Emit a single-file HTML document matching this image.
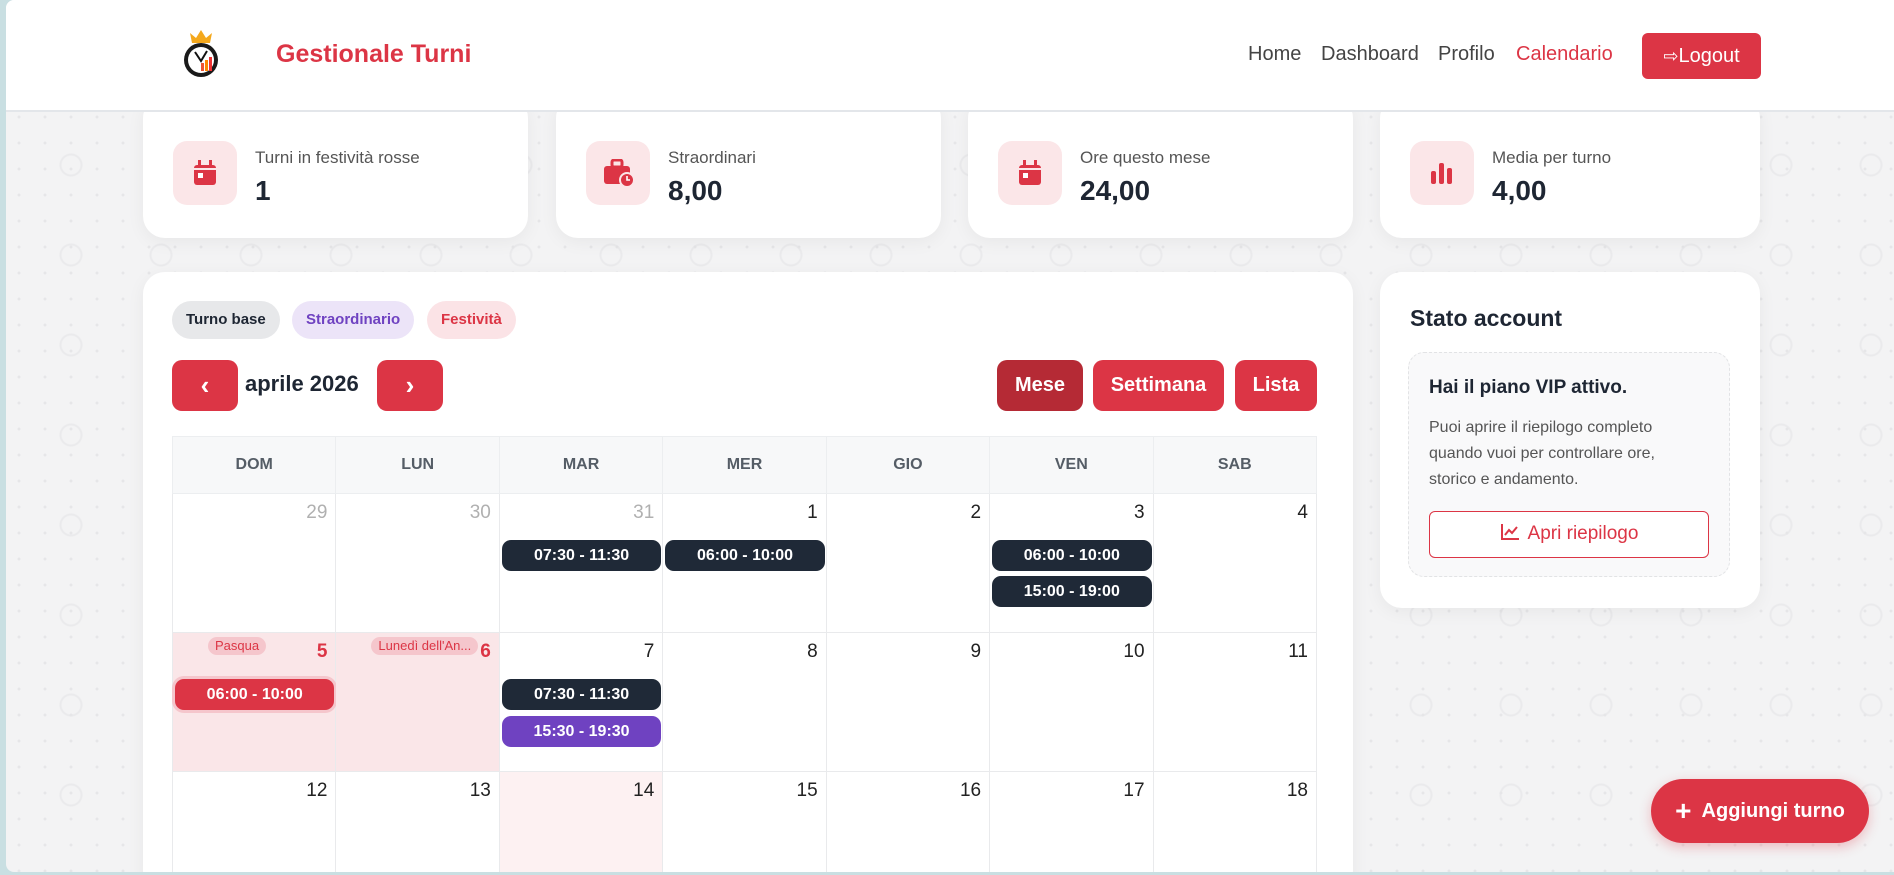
<!DOCTYPE html>
<html><head><meta charset="utf-8"><style>
*{box-sizing:border-box;margin:0;padding:0}
body{width:1894px;height:875px;overflow:hidden;background:#c9dfe2;font-family:"Liberation Sans",Arial,sans-serif;position:relative}
.frame{position:absolute;left:6px;top:0;right:0;bottom:3px;background:#f3f3f4;border-radius:8px 0 0 8px;overflow:hidden;
background-image:radial-gradient(circle,#e6e6e8 1.2px,transparent 1.8px),radial-gradient(circle,transparent 9px,#eaeaec 10px,#eaeaec 11px,transparent 12px);
background-size:26px 26px,90px 90px;background-position:0 0,20px 30px}
.hdr{position:absolute;left:0;top:0;right:0;height:112px;background:#fff;border-bottom:2px solid #e3e6ea}
.abs{position:absolute}
.title{left:270px;top:40px;color:#dc3545;font-weight:bold;font-size:25px}
.nav{top:43px;font-size:20px;color:#444}
.logout{left:1636px;top:33px;width:119px;height:46px;background:#dc3545;border-radius:6px;color:#fff;font-size:20px;line-height:46px;text-align:center}
.card{position:absolute;background:#fff;border-radius:22px;box-shadow:0 4px 18px rgba(0,0,0,.05)}
.ibox{position:absolute;left:30px;top:45px;width:64px;height:64px;background:#fbe6e8;border-radius:14px;display:flex;align-items:center;justify-content:center}
.lbl{position:absolute;left:112px;top:52px;font-size:17px;color:#555}
.val{position:absolute;left:112px;top:79px;font-size:28px;font-weight:bold;color:#1e2633}
.chip{position:absolute;top:301px;height:38px;border-radius:19px;font-size:15px;font-weight:bold;line-height:38px;padding:0 14px}
.btn{position:absolute;top:360px;height:51px;background:#dc3545;color:#fff;border-radius:10px;font-weight:bold;font-size:20px;line-height:51px;text-align:center}
table{position:absolute;left:166px;top:436px;width:1145px;border-collapse:collapse;background:#fff}
th{height:57px;background:#f7f8f9;color:#555d66;font-size:16px;font-weight:bold;border:1px solid #eceef0}
td{height:139px;border:1px solid #e9eaec;vertical-align:top;position:relative;text-align:right;padding:8px 8px 0 0;font-size:19px;color:#222;width:163.5px}
td.o{color:#b0b0b0}
td.h{background:#fae6e8}
td.h14{background:#fdf1f2}
.ev{position:absolute;left:2px;right:1px;height:31px;border-radius:9px;background:#1f2937;color:#fff;font-weight:bold;font-size:16px;line-height:31px;text-align:center}
.hn{color:#dc3545;font-weight:bold}
.hl{position:absolute;top:4px;height:18px;background:#f5c6cc;color:#dc3545;font-size:13px;line-height:18px;padding:0 7px;border-radius:9px}
</style></head><body>
<div class="frame">
<div class="card" style="left:137px;top:96px;width:385px;height:142px"><div class="ibox"><svg width="24" height="26" viewBox="0 0 24 26"><rect x="1" y="5" width="22" height="20" rx="3" fill="#dc3545"/><rect x="5" y="0" width="3" height="7" fill="#dc3545"/><rect x="16" y="0" width="3" height="7" fill="#dc3545"/><rect x="1" y="8" width="22" height="2" fill="#fbe6e8"/><rect x="5" y="13" width="5" height="5" fill="#fff"/></svg></div><div class="lbl">Turni in festività rosse</div><div class="val">1</div></div>
<div class="card" style="left:550px;top:96px;width:385px;height:142px"><div class="ibox"><svg width="30" height="28" viewBox="0 0 30 28"><rect x="9" y="1" width="10" height="7" rx="2" fill="none" stroke="#dc3545" stroke-width="3"/><rect x="1" y="7" width="26" height="18" rx="3" fill="#dc3545"/><circle cx="24" cy="21" r="7" fill="#dc3545" stroke="#fbe6e8" stroke-width="2"/><path d="M24 17v4h3" stroke="#fff" stroke-width="1.6" fill="none"/></svg></div><div class="lbl">Straordinari</div><div class="val">8,00</div></div>
<div class="card" style="left:962px;top:96px;width:385px;height:142px"><div class="ibox"><svg width="24" height="26" viewBox="0 0 24 26"><rect x="1" y="5" width="22" height="20" rx="3" fill="#dc3545"/><rect x="5" y="0" width="3" height="7" fill="#dc3545"/><rect x="16" y="0" width="3" height="7" fill="#dc3545"/><rect x="1" y="8" width="22" height="2" fill="#fbe6e8"/><rect x="5" y="13" width="5" height="5" fill="#fff"/></svg></div><div class="lbl">Ore questo mese</div><div class="val">24,00</div></div>
<div class="card" style="left:1374px;top:96px;width:380px;height:142px"><div class="ibox"><svg width="24" height="24" viewBox="0 0 24 24"><rect x="1" y="10" width="5" height="13" rx="2" fill="#dc3545"/><rect x="9" y="2" width="5" height="21" rx="2" fill="#dc3545"/><rect x="17" y="7" width="5" height="16" rx="2" fill="#dc3545"/></svg></div><div class="lbl">Media per turno</div><div class="val">4,00</div></div>

<div class="hdr">
<svg class="abs" style="left:174px;top:29px" width="42" height="50" viewBox="0 0 42 50"><path d="M12 14l-2-10 6 5 5-8 5 8 6-5-2 10z" fill="#f4a81c"/><circle cx="21" cy="31" r="17" fill="#1a1a1a"/><circle cx="21" cy="31" r="13" fill="#fff"/><path d="M15 23l6 9 6-10" stroke="#111" stroke-width="2" fill="none"/><rect x="21" y="34" width="3" height="8" fill="#e53"/><rect x="25" y="31" width="3" height="11" fill="#f80"/><rect x="29" y="28" width="3" height="14" fill="#e33"/></svg>
<div class="abs title">Gestionale Turni</div>
<div class="abs nav" style="left:1242px">Home</div>
<div class="abs nav" style="left:1315px">Dashboard</div>
<div class="abs nav" style="left:1432px">Profilo</div>
<div class="abs nav" style="left:1510px;color:#dc3545">Calendario</div>
<div class="abs logout"><span style="font-size:18px">⇨</span>Logout</div>
</div>

<div class="card" style="left:137px;top:272px;width:1210px;height:620px;border-radius:22px"></div>
<div class="chip" style="left:166px;background:#e7e8ea;color:#1e2633">Turno base</div>
<div class="chip" style="left:286px;background:#ece4f8;color:#6f42c1">Straordinario</div>
<div class="chip" style="left:421px;background:#fbe3e6;color:#dc3545">Festività</div>
<div class="btn" style="left:166px;width:66px;font-size:26px">‹</div>
<div class="abs" style="left:239px;top:371px;font-size:22px;font-weight:bold;color:#1e2633">aprile 2026</div>
<div class="btn" style="left:371px;width:66px;font-size:26px">›</div>
<div class="btn" style="left:991px;width:86px;background:#b52a35">Mese</div>
<div class="btn" style="left:1087px;width:131px">Settimana</div>
<div class="btn" style="left:1229px;width:82px">Lista</div>

<table>
<tr><th>DOM</th><th>LUN</th><th>MAR</th><th>MER</th><th>GIO</th><th>VEN</th><th>SAB</th></tr>
<tr><td class="o">29</td><td class="o">30</td><td class="o">31<div class="ev" style="top:46px">07:30 - 11:30</div></td><td>1<div class="ev" style="top:46px">06:00 - 10:00</div></td><td>2</td><td>3<div class="ev" style="top:46px">06:00 - 10:00</div><div class="ev" style="top:82px">15:00 - 19:00</div></td><td>4</td></tr>
<tr><td class="h"><span class="hl" style="left:35px">Pasqua</span><span class="hn">5</span><div class="ev" style="top:46px;background:#dc3545;box-shadow:0 0 0 3px #f5c6cc">06:00 - 10:00</div></td><td class="h"><span class="hl" style="left:35px">Lunedì dell'An...</span><span class="hn">6</span></td><td>7<div class="ev" style="top:46px">07:30 - 11:30</div><div class="ev" style="top:83px;background:#6f42c1">15:30 - 19:30</div></td><td>8</td><td>9</td><td>10</td><td>11</td></tr>
<tr><td>12</td><td>13</td><td class="h14">14</td><td>15</td><td>16</td><td>17</td><td>18</td></tr>
</table>

<div class="card" style="left:1374px;top:272px;width:380px;height:336px">
<div class="abs" style="left:30px;top:33px;font-size:23px;font-weight:bold;color:#1e2633">Stato account</div>
<div class="abs" style="left:28px;top:80px;width:322px;height:225px;background:#f9f9fa;border:1px dashed #e2e3e5;border-radius:16px">
<div class="abs" style="left:20px;top:24px;font-size:19px;font-weight:bold;color:#1e2633">Hai il piano VIP attivo.</div>
<div class="abs" style="left:20px;top:62px;width:262px;font-size:16px;line-height:26px;color:#555">Puoi aprire il riepilogo completo quando vuoi per controllare ore, storico e andamento.</div>
<div class="abs" style="left:20px;top:158px;width:280px;height:47px;border:1.5px solid #dc3545;border-radius:6px;background:#fff;color:#dc3545;font-size:19px;line-height:44px;text-align:center"><svg width="20" height="18" viewBox="0 0 20 18" style="vertical-align:-2px;margin-right:8px"><path d="M2 1v15h17" stroke="#dc3545" stroke-width="2" fill="none"/><path d="M5 12l4-5 3 3 5-6" stroke="#dc3545" stroke-width="2" fill="none"/></svg>Apri riepilogo</div>
</div></div>

<div class="abs" style="left:1645px;top:779px;width:218px;height:64px;border-radius:32px;background:#dc3545;color:#fff;font-weight:bold;font-size:20px;line-height:64px;text-align:center;box-shadow:0 4px 12px rgba(220,53,69,.3)"><span style="font-size:28px;vertical-align:-3px;margin-right:10px">+</span>Aggiungi turno</div>
</div>
</body></html>
